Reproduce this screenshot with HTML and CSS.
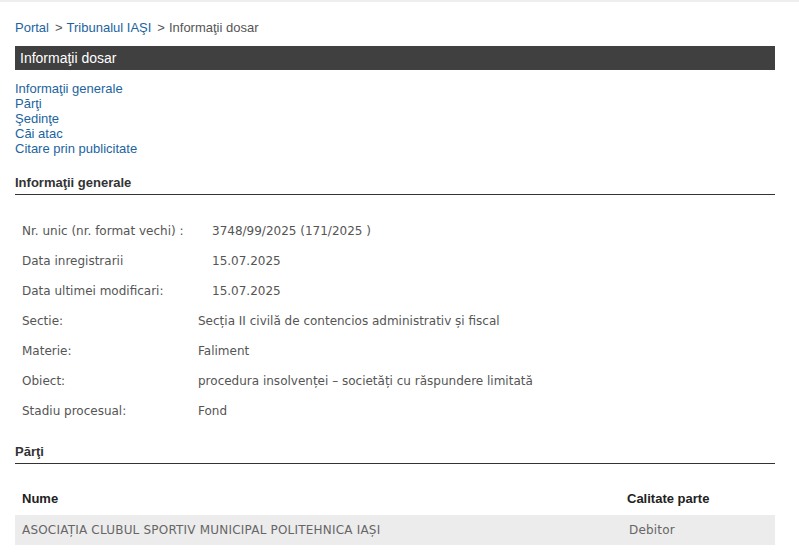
FILE: index.html
```html
<!DOCTYPE html>
<html lang="ro">
<head>
<meta charset="utf-8">
<title>Informaţii dosar</title>
<link rel="stylesheet" href="styles.css">
</head>
<body>
<div class="page">
  <div class="breadcrumb">
    <a href="#">Portal</a><span class="sep">&gt;</span><a href="#">Tribunalul IAŞI</a><span class="sep">&gt;</span><span class="current">Informaţii dosar</span>
  </div>
  <div class="titlebar">Informaţii dosar</div>
  <ul class="toc">
    <li><a href="#">Informaţii generale</a></li>
    <li><a href="#">Părţi</a></li>
    <li><a href="#">Şedinţe</a></li>
    <li><a href="#">Căi atac</a></li>
    <li><a href="#">Citare prin publicitate</a></li>
  </ul>

  <h2 class="section">Informaţii generale</h2>
  <table class="info info-a">
    <tr><td class="lbl">Nr. unic (nr. format vechi) :</td><td>3748/99/2025 (171/2025 )</td></tr>
    <tr><td class="lbl">Data inregistrarii</td><td>15.07.2025</td></tr>
    <tr><td class="lbl">Data ultimei modificari:</td><td>15.07.2025</td></tr>
  </table>
  <table class="info info-b">
    <tr><td class="lbl">Sectie:</td><td>Secția II civilă de contencios administrativ și fiscal</td></tr>
    <tr><td class="lbl">Materie:</td><td>Faliment</td></tr>
    <tr><td class="lbl">Obiect:</td><td>procedura insolvenței – societăți cu răspundere limitată</td></tr>
    <tr><td class="lbl">Stadiu procesual:</td><td>Fond</td></tr>
  </table>

  <h2 class="section section-parti">Părţi</h2>
  <table class="parti">
    <thead>
      <tr><th class="nume">Nume</th><th>Calitate parte</th></tr>
    </thead>
    <tbody>
      <tr><td>ASOCIAȚIA CLUBUL SPORTIV MUNICIPAL POLITEHNICA IAȘI</td><td>Debitor</td></tr>
    </tbody>
  </table>
</div>
</body>
</html>
```

FILE: styles.css
```css
html, body {
  margin: 0;
  padding: 0;
  background: #fff;
}
body {
  border-top: 2px solid #eeeeee;
  font-family: "Liberation Sans", Arial, sans-serif;
  color: #333;
}
.page {
  width: 760px;
  padding: 0 0 0 15px;
}
a {
  color: #1c64a0;
  text-decoration: none;
}
.breadcrumb {
  font-size: 13px;
  line-height: 16px;
  padding-top: 18px;
  height: 26px;
  color: #555;
}
.breadcrumb .sep {
  margin: 0 4px 0 6px;
  color: #555;
}
.titlebar {
  background: #404040;
  color: #fff;
  font-size: 14px;
  height: 24px;
  line-height: 24px;
  padding-left: 5px;
}
.toc {
  list-style: none;
  margin: 0;
  padding: 11px 0 0 0;
  font-size: 13px;
  line-height: 15px;
}
.section {
  margin: 19px 0 0 0;
  font-size: 13px;
  font-weight: bold;
  color: #333;
  line-height: 16px;
  padding-bottom: 3px;
  border-bottom: 1px solid #333;
}
.info {
  border-collapse: collapse;
  font-family: "DejaVu Sans", sans-serif;
  font-size: 12px;
  color: #555;
}
.info td {
  height: 30px;
  padding: 0 0 0 7px;
  vertical-align: middle;
}
.info-a {
  margin-top: 21px;
}
.info-a td.lbl { width: 183px; }
.info-b td.lbl { width: 169px; }
.section-parti {
  margin-top: 18px;
}
.parti {
  width: 760px;
  border-collapse: collapse;
  margin-top: 18px;
  font-family: "DejaVu Sans", sans-serif;
  font-size: 12px;
  letter-spacing: 0.2px;
}
.parti th {
  text-align: left;
  font-family: "Liberation Sans", Arial, sans-serif;
  font-size: 13px;
  font-weight: bold;
  color: #222;
  letter-spacing: 0;
  height: 33px;
  padding: 0 0 0 7px;
}
.parti th.nume { width: 598px; }
.parti td {
  background: #ececec;
  color: #666;
  height: 30px;
  padding: 0 0 0 7px;
}
.parti td + td { padding-left: 9px; }
```
